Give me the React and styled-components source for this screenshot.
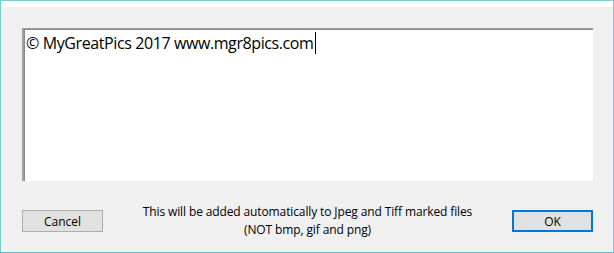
import React from "react";
import styled, { createGlobalStyle } from "styled-components";

const Global = createGlobalStyle`
  html, body {
    margin: 0;
    padding: 0;
    background: #f0f0f0;
  }
  body {
    font-family: "Open Sans", "Noto Sans", sans-serif;
    color: #000;
  }
`;

export default function App() {
  return (
    <>
      <Global />
      <Window>
        <TitleStrip />
        <Body>
          <TextArea>
            <Line>
              © MyGreatPics 2017 www.mgr8pics.com
              <Caret />
            </Line>
          </TextArea>
          <Footer>
            <Button>Cancel</Button>
            <Note>
              This will be added automatically to Jpeg and Tiff marked files
              <br />
              (NOT bmp, gif and png)
            </Note>
            <Button $primary>OK</Button>
          </Footer>
        </Body>
      </Window>
    </>
  );
}

const Window = styled.div`
  width: 614px;
  height: 253px;
  box-sizing: border-box;
  border: 1px solid #7ccbcf;
  border-bottom-color: #5fbcd3;
  background: #f0f0f0;
  display: flex;
  flex-direction: column;
`;

const TitleStrip = styled.div`
  height: 6px;
  background: #fff;
`;

const Body = styled.div`
  flex: 1;
  display: flex;
  flex-direction: column;
  padding: 21px 20px 0 21px;
`;

const TextArea = styled.div`
  height: 153px;
  box-sizing: border-box;
  background: #fff;
  border-top: 1px solid #a0a0a0;
  border-left: 2px solid #a0a0a0;
  box-shadow: inset 1px 1px 0 #8a8a8a;
  padding: 3px 2px;
`;

const Line = styled.div`
  font-size: 16px;
  letter-spacing: -0.4px;
  line-height: 21px;
  white-space: nowrap;
  display: flex;
  align-items: center;
`;

const Caret = styled.span`
  display: inline-block;
  width: 1px;
  height: 22px;
  background: #000;
  margin-left: 1px;
`;

const Footer = styled.div`
  flex: 1;
  display: flex;
  align-items: center;
  justify-content: space-between;
  padding-top: 9px;
`;

const Button = styled.div`
  width: 81px;
  height: 22px;
  box-sizing: border-box;
  display: flex;
  align-items: center;
  justify-content: center;
  font-size: 12px;
  background: #e1e1e1;
  border: 1px solid ${(p) => (p.$primary ? "#0078d7" : "#adadad")};
  box-shadow: ${(p) => (p.$primary ? "inset 0 0 0 1px #0078d7" : "none")};
`;

const Note = styled.div`
  font-size: 12px;
  letter-spacing: -0.12px;
  line-height: 18px;
  text-align: center;
`;
